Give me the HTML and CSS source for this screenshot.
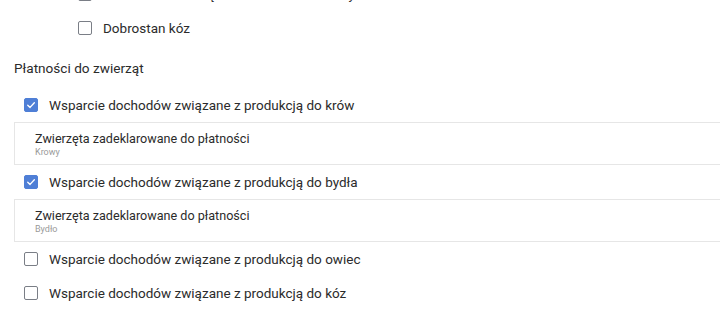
FILE: index.html
```html
<!DOCTYPE html>
<html lang="pl">
<head>
<meta charset="utf-8">
<link rel="stylesheet" href="styles.css">
</head>
<body>
<div class="page">
  <div class="sublist">
    <label class="row"><span class="box"></span><span class="label">Dobrostan zwierząt w sektorze hodowli bydła</span></label>
    <label class="row"><span class="box"></span><span class="label">Dobrostan kóz</span></label>
  </div>
  <div class="heading">Płatności do zwierząt</div>
  <div class="list">
    <label class="row"><span class="box checked"><svg viewBox="0 0 14 14" width="14" height="14"><path d="M3.2 7.2 L5.9 9.8 L10.9 4.4" fill="none" stroke="#fff" stroke-width="1.6" stroke-linecap="round" stroke-linejoin="round"/></svg></span><span class="label">Wsparcie dochodów związane z produkcją do krów</span></label>
    <div class="card">
      <div class="card-title">Zwierzęta zadeklarowane do płatności</div>
      <div class="card-sub">Krowy</div>
    </div>
    <label class="row"><span class="box checked"><svg viewBox="0 0 14 14" width="14" height="14"><path d="M3.2 7.2 L5.9 9.8 L10.9 4.4" fill="none" stroke="#fff" stroke-width="1.6" stroke-linecap="round" stroke-linejoin="round"/></svg></span><span class="label">Wsparcie dochodów związane z produkcją do bydła</span></label>
    <div class="card">
      <div class="card-title">Zwierzęta zadeklarowane do płatności</div>
      <div class="card-sub">Bydło</div>
    </div>
    <label class="row"><span class="box"></span><span class="label">Wsparcie dochodów związane z produkcją do owiec</span></label>
    <label class="row"><span class="box"></span><span class="label">Wsparcie dochodów związane z produkcją do kóz</span></label>
  </div>
</div>
</body>
</html>
```
FILE: styles.css
```css
html, body {
  margin: 0;
  padding: 0;
  background: #fff;
  overflow: hidden;
}
body {
  font-family: Roboto, "Noto Sans", "Liberation Sans", sans-serif;
  color: #2b2b2b;
  width: 720px;
  height: 321px;
}
.page {
  padding-left: 14px;
  margin-top: -23px;
}
.sublist {
  padding-left: 64px;
}
.row {
  display: flex;
  align-items: center;
  height: 34px;
  gap: 11px;
  font-size: 13.5px;
  white-space: nowrap;
}
.list .row {
  padding-left: 10px;
}
.box {
  box-sizing: border-box;
  width: 14px;
  height: 14px;
  flex: none;
  border: 1.5px solid #7a7e86;
  border-radius: 2px;
  display: flex;
  align-items: center;
  justify-content: center;
}
.box.checked {
  background: #4f7fd6;
  border-color: #4f7fd6;
}
.box svg {
  display: block;
}
.label {
  color: #2b2b2b;
  line-height: 16px;
}
.heading {
  font-size: 13.6px;
  line-height: 16px;
  margin-top: 15px;
  margin-bottom: 12px;
  color: #2b2b2b;
}
.card {
  border: 1px solid #e6e6e6;
  margin-right: -20px;
  height: 43px;
  box-sizing: border-box;
  padding: 8px 20px 0;
}
.card-title {
  font-size: 12.6px;
  line-height: 15px;
  color: #2b2b2b;
}
.card-sub {
  font-size: 9px;
  line-height: 12px;
  color: #9a9a9a;
}
```
